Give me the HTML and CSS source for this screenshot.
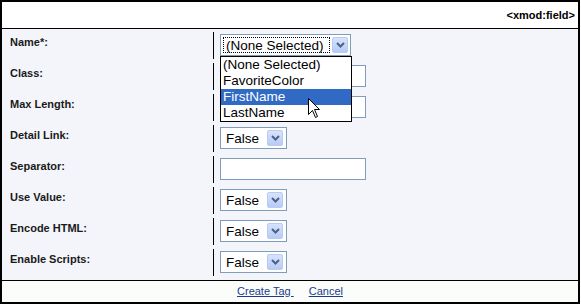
FILE: index.html
```html
<!DOCTYPE html>
<html>
<head>
<meta charset="utf-8">
<link rel="stylesheet" href="styles.css">
</head>
<body>
<div class="panel">
  <div class="head">&lt;xmod:field&gt;</div>
  <div class="form">
    <div class="row">
      <div class="label">Name*:</div>
      <div class="value">
        <div class="select w-name">
          <span class="text focus">(None Selected)</span>
          <span class="btn"><svg width="9" height="6" viewBox="0 0 9 6"><path d="M1 1 L4.5 4.5 L8 1" fill="none" stroke="#4d6185" stroke-width="2"/></svg></span>
        </div>
        <ul class="dropdown">
          <li>(None Selected)</li>
          <li>FavoriteColor</li>
          <li class="hl">FirstName</li>
          <li>LastName</li>
        </ul>
      </div>
    </div>
    <div class="row">
      <div class="label">Class:</div>
      <div class="value"><div class="input"></div></div>
    </div>
    <div class="row">
      <div class="label">Max Length:</div>
      <div class="value"><div class="input"></div></div>
    </div>
    <div class="row">
      <div class="label">Detail Link:</div>
      <div class="value">
        <div class="select w-bool"><span class="text">False</span><span class="btn"><svg width="9" height="6" viewBox="0 0 9 6"><path d="M1 1 L4.5 4.5 L8 1" fill="none" stroke="#4d6185" stroke-width="2"/></svg></span></div>
      </div>
    </div>
    <div class="row">
      <div class="label">Separator:</div>
      <div class="value"><div class="input"></div></div>
    </div>
    <div class="row">
      <div class="label">Use Value:</div>
      <div class="value">
        <div class="select w-bool"><span class="text">False</span><span class="btn"><svg width="9" height="6" viewBox="0 0 9 6"><path d="M1 1 L4.5 4.5 L8 1" fill="none" stroke="#4d6185" stroke-width="2"/></svg></span></div>
      </div>
    </div>
    <div class="row">
      <div class="label">Encode HTML:</div>
      <div class="value">
        <div class="select w-bool"><span class="text">False</span><span class="btn"><svg width="9" height="6" viewBox="0 0 9 6"><path d="M1 1 L4.5 4.5 L8 1" fill="none" stroke="#4d6185" stroke-width="2"/></svg></span></div>
      </div>
    </div>
    <div class="row">
      <div class="label">Enable Scripts:</div>
      <div class="value">
        <div class="select w-bool"><span class="text">False</span><span class="btn"><svg width="9" height="6" viewBox="0 0 9 6"><path d="M1 1 L4.5 4.5 L8 1" fill="none" stroke="#4d6185" stroke-width="2"/></svg></span></div>
      </div>
    </div>
  </div>
  <div class="foot">
    <a href="#" class="link">Create Tag&nbsp;</a>
    <a href="#" class="link">Cancel</a>
  </div>
  <svg class="cursor" width="13" height="21" viewBox="0 0 13 21"><path d="M0.5 0.5 L0.5 16.5 L4.5 12.5 L7.5 19.5 L9.5 18.5 L6.5 11.5 L11.5 11.5 Z" fill="#fff" stroke="#000" stroke-width="1" stroke-linejoin="miter"/></svg>
</div>
</body>
</html>
```

FILE: styles.css
```css
* { box-sizing: border-box; }
html, body { margin: 0; padding: 0; background: #ffffff; }
body { font-family: "Liberation Sans", Arial, sans-serif; }

.panel {
  position: relative;
  width: 580px;
  height: 304px;
  border: 2px solid #000;
  display: flex;
  flex-direction: column;
}

.head {
  height: 27px;
  background: #ffffff;
  border-bottom: 1px solid #000;
  font-size: 11px;
  font-weight: bold;
  line-height: 13px;
  padding: 7px 3px 0 0;
  text-align: right;
  color: #000;
}

.form {
  background: #f4f5fb;
  padding: 3px 0 4px 0;
  display: flex;
  flex-direction: column;
  gap: 4px;
  border-bottom: 1px solid #000;
}

.row {
  display: grid;
  grid-template-columns: 211px 1fr;
  height: 27px;
}

.label {
  font-size: 11px;
  font-weight: bold;
  line-height: 13px;
  color: #1a1a1a;
  padding: 4px 0 0 8px;
}

.value {
  position: relative;
  border-left: 1px solid #000;
  padding: 2px 0 0 6px;
}

.select {
  height: 22px;
  border: 1px solid #7f9db9;
  background: #fff;
  display: flex;
  align-items: center;
  padding: 2px 2px 2px 2px;
  font-size: 13.5px;
  line-height: 15px;
  color: #000;
}
.w-name { width: 131px; }
.w-bool { width: 67px; padding-right: 3px; }

.select .text {
  flex: 1;
  padding-left: 3px;
  height: 16px;
  display: flex;
  align-items: center;
  white-space: nowrap;
}
.select .text.focus {
  border: 1px dotted #000;
  padding-left: 2px;
  margin-right: 2px;
}

.btn {
  width: 16px;
  height: 16px;
  flex: none;
  border: 1px solid #b9cbf3;
  border-radius: 2px;
  background: linear-gradient(#d6e3fe, #b7cbf6);
  display: flex;
  align-items: center;
  justify-content: center;
}

.input {
  width: 146px;
  height: 22px;
  border: 1px solid #7f9db9;
  background: #fff;
}

.dropdown {
  position: absolute;
  left: 6px;
  top: 24px;
  width: 132px;
  margin: 0;
  padding: 0;
  list-style: none;
  background: #fff;
  border: 1px solid #000;
  font-size: 13.5px;
  line-height: 16px;
  z-index: 2;
}
.dropdown li {
  height: 16px;
  padding-left: 2px;
  color: #000;
  white-space: nowrap;
}
.dropdown li.hl {
  background: #316ac5;
  color: #fff;
}

.foot {
  flex: 1;
  background: #fbfdfa;
  display: flex;
  justify-content: center;
  gap: 15px;
  padding-top: 4px;
  font-size: 11px;
  line-height: 13px;
}
.link {
  color: #1b3b8c;
  text-decoration: underline;
}

.cursor {
  position: absolute;
  left: 306px;
  top: 96px;
  z-index: 3;
}
```
